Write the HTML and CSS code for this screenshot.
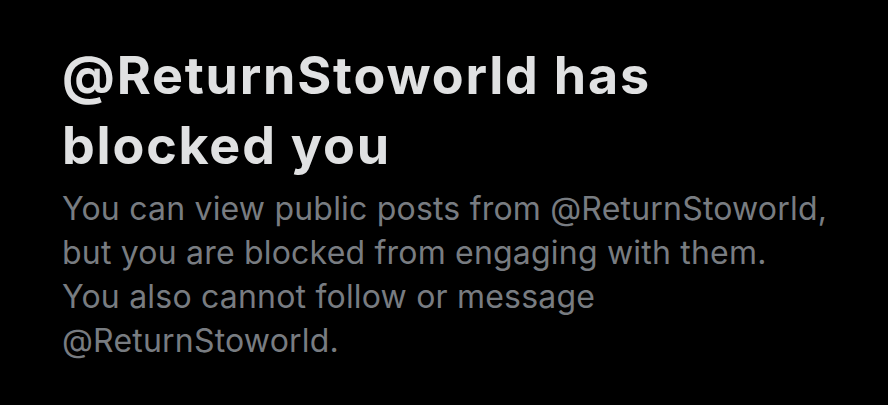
FILE: index.html
```html
<!DOCTYPE html>
<html lang="en">
<head>
<meta charset="utf-8">
<title>Blocked</title>
<link rel="stylesheet" href="styles.css">
</head>
<body>
<main class="notice">
  <h1 class="notice-title">@ReturnStoworld has blocked you</h1>
  <p class="notice-text">You can view public posts from @ReturnStoworld, but you are blocked from engaging with them.<br>You also cannot follow or message @ReturnStoworld.</p>
</main>
</body>
</html>
```
FILE: styles.css
```css
html, body {
  margin: 0;
  padding: 0;
  background: #000;
}
body {
  width: 888px;
  height: 405px;
  overflow: hidden;
}
.notice {
  display: flex;
  flex-direction: column;
  gap: 6px;
  padding: 41px 20px 0 62px;
  width: 806px;
}
.notice-title {
  margin: 0;
  font-family: Inter, "Liberation Sans", sans-serif;
  font-weight: 700;
  font-size: 52px;
  line-height: 70px;
  letter-spacing: 1.8px;
  color: #e0e1e2;
  width: 700px;
}
.notice-text {
  margin: 0;
  font-family: Inter, "Liberation Sans", sans-serif;
  font-weight: 400;
  font-size: 32px;
  line-height: 44px;
  letter-spacing: 0.2px;
  color: #787c81;
  width: 790px;
}
```
